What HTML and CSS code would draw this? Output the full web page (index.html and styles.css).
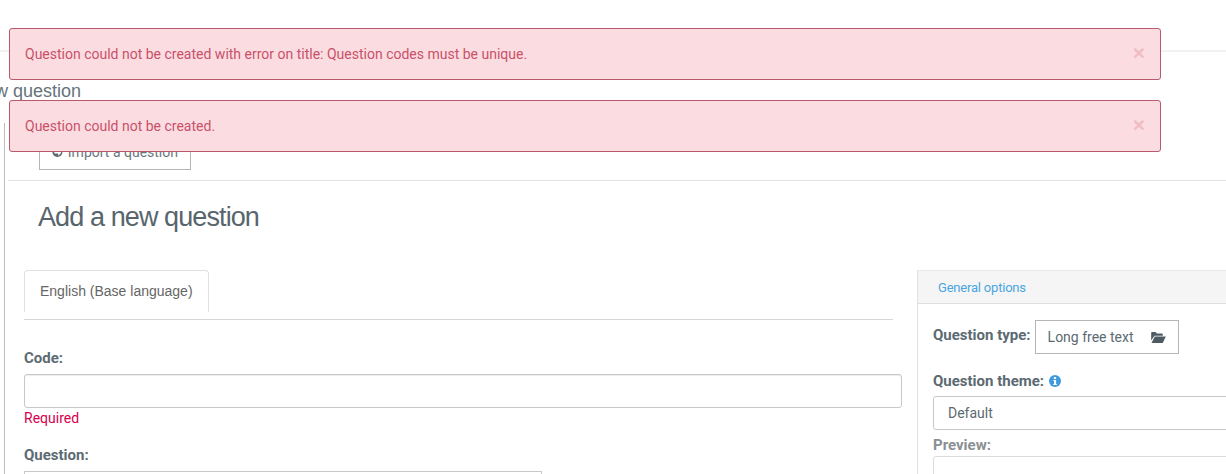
FILE: index.html
```html
<!DOCTYPE html>
<html lang="en">

<head>
    <meta charset="UTF-8">
    <meta name="viewport" content="width=device-width, initial-scale=1.0">
    <title>Add a new question</title>
    <link rel="stylesheet" href="styles.css">
</head>

<body>
    <div class="topbar"></div>
    <div class="crumb">Add a new question</div>

    <div class="main">
        <div class="toolbar">
            <a class="btn-import" href="javascript:;">
                <svg class="import-icon" viewBox="0 0 14 14">
                    <circle cx="7" cy="7" r="6.500" fill="#5c6a72"/>
                    <path d="M3 6h5V3l4 5-4 4V9H3z" fill="#fff"/>
                </svg>
                Import a question
            </a>
        </div>

        <h1 class="page-title">Add a new question</h1>

        <div class="columns">
            <div class="col-left">
                <div class="tabs">
                    <div class="tab">English (Base language)</div>
                </div>
                <label class="field-label">Code:</label>
                <div class="text-input"></div>
                <div class="required">Required</div>
                <label class="field-label question-label">Question:</label>
                <div class="editor"></div>
            </div>

            <div class="panel">
                <div class="panel-head"><a href="javascript:;">General options</a></div>
                <div class="panel-body">
                    <div class="type-row">
                        <label class="field-label type-label">Question type:</label>
                        <div class="type-btn">
                            Long free text
                            <svg class="folder-icon" viewBox="0 0 16 12">
                                <path d="M0 1.2C0 .5.5 0 1.2 0h3.6l1.5 1.600h5.200c.7 0 1.200.5 1.200 1.200V4H3.600L0 9.400z" fill="#4f5b63"/>
                                <path d="M3.900 5H16l-3.400 7H.4z" fill="#4f5b63"/>
                            </svg>
                        </div>
                    </div>
                    <label class="field-label theme-label">Question theme:
                        <svg class="info-icon" viewBox="0 0 12 12">
                            <circle cx="6" cy="6" r="6" fill="#3f9ae0"/>
                            <rect x="4.900" y="2" width="2.200" height="2" fill="#fff"/>
                            <path d="M4.300 5h2.800v4h.8v1.100H4.200V9H5V6.100H4.300z" fill="#fff"/>
                        </svg>
                    </label>
                    <div class="select-box">Default</div>
                    <label class="field-label preview-label">Preview:</label>
                    <div class="preview-box"></div>
                </div>
            </div>
        </div>
    </div>

    <!-- alerts sit over the page -->
    <div class="alerts">
        <div class="alert">
            Question could not be created with error on title: Question codes must be unique.
            <span class="alert-close">×</span>
        </div>
        <div class="alert">
            Question could not be created.
            <span class="alert-close">×</span>
        </div>
    </div>
</body>

</html>
```

FILE: styles.css
```css
html,
body {
    margin: 0;
    padding: 0;
    height: 474px;
    overflow: hidden;
    background: #fff;
}

body {
    position: relative;
    font-family: Roboto, "Liberation Sans", sans-serif;
    font-size: 14px;
    color: #5c6a72;
}

.topbar {
    height: 50px;
    border-bottom: 2px solid #f2f2f2;
}

.crumb {
    margin: 28px 0 0 -77px;
    height: 22px;
    font-family: "Liberation Sans", Arial, sans-serif;
    font-size: 18px;
    line-height: 22px;
    white-space: nowrap;
    color: #66737a;
}

.main {
    margin: 21px 0 0 4px;
    height: 351px;
    border-left: 1px solid #bdbdbd;
}

.toolbar {
    height: 58px;
    margin-left: 3px;
    padding: 11px 0 0 31px;
    box-sizing: border-box;
    border-bottom: 1px solid #e3e3e3;
}

.btn-import {
    display: inline-flex;
    align-items: center;
    gap: 5px;
    width: 152px;
    height: 36px;
    box-sizing: border-box;
    padding: 0 12px;
    border: 1px solid #b5b5b5;
    font-size: 14px;
    white-space: nowrap;
    color: #6b777e;
    text-decoration: none;
}

.import-icon {
    width: 14px;
    height: 14px;
}

.page-title {
    margin: 20px 0 0 33px;
    height: 32px;
    font-family: "Liberation Sans", Arial, sans-serif;
    font-size: 27px;
    font-weight: 400;
    line-height: 32px;
    letter-spacing: -0.9px;
    color: #58656d;
}

.columns {
    display: flex;
    align-items: flex-start;
    margin-top: 37px;
    padding-left: 19px;
}

.col-left {
    flex: 0 0 878px;
    margin-right: 15px;
}

.tabs {
    width: 869px;
    height: 49px;
    border-bottom: 1px solid #d5d8da;
    margin-bottom: 30px;
}

.tab {
    width: 185px;
    height: 42px;
    box-sizing: border-box;
    padding-left: 15px;
    border: 1px solid #e0e0e0;
    border-bottom: 0;
    border-radius: 4px 4px 0 0;
    font-family: "Liberation Sans", Arial, sans-serif;
    font-size: 14px;
    line-height: 41px;
    color: #666;
}

.field-label {
    display: block;
    font-size: 15px;
    font-weight: 700;
    line-height: 17px;
    color: #5c6a72;
    white-space: nowrap;
}

.text-input {
    height: 34px;
    margin-top: 7px;
    box-sizing: border-box;
    border: 1px solid #c8c8c8;
    border-radius: 3px;
    box-shadow: inset 0 1px 1px rgba(0, 0, 0, 0.075);
}

.required {
    font-size: 14px;
    line-height: 20px;
    color: #d6004c;
}

.question-label {
    margin-top: 19px;
}

.editor {
    width: 518px;
    height: 10px;
    margin-top: 7px;
    box-sizing: border-box;
    border: 1px solid #c8c8c8;
}

.panel {
    flex: 0 0 320px;
    height: 210px;
    box-sizing: border-box;
    border-left: 1px solid #dfe2e4;
    border-top: 1px solid #e8e8e8;
}

.panel-head {
    height: 33px;
    box-sizing: border-box;
    padding-left: 20px;
    background: #f5f5f5;
    border-bottom: 1px solid #dde0e2;
    font-size: 13px;
    line-height: 33px;
    letter-spacing: -0.2px;
}

.panel-head a {
    color: #4aa6e3;
    text-decoration: none;
}

.panel-body {
    padding: 16px 0 0 15px;
}

.type-row {
    display: flex;
    gap: 4px;
}

.type-label {
    align-self: center;
    margin-bottom: 4px;
}

.type-btn {
    display: flex;
    align-items: center;
    width: 144px;
    height: 34px;
    box-sizing: border-box;
    padding-left: 12px;
    border: 1px solid #b5b5b5;
    font-size: 14px;
    color: #5c6a72;
}

.folder-icon {
    width: 15px;
    height: 11px;
    margin-left: 17px;
}

.theme-label {
    margin-top: 19px;
}

.info-icon {
    width: 12px;
    height: 12px;
    margin-left: 1px;
    vertical-align: -1px;
}

.select-box {
    height: 34px;
    margin-top: 6px;
    box-sizing: border-box;
    padding-left: 14px;
    border: 1px solid #c8c8c8;
    border-radius: 3px;
    font-size: 14px;
    line-height: 32px;
    color: #5c6a72;
}

.preview-label {
    margin-top: 7px;
    color: #8a8f93;
}

.preview-box {
    height: 40px;
    margin-top: 2px;
    box-sizing: border-box;
    border: 1px solid #dcdcdc;
    border-radius: 3px;
}

.alerts {
    position: absolute;
    top: 28px;
    left: 9px;
    width: 1152px;
    display: flex;
    flex-direction: column;
    gap: 20px;
}

.alert {
    display: flex;
    justify-content: space-between;
    align-items: center;
    height: 52px;
    box-sizing: border-box;
    padding: 0 15px;
    background: #fbdde1;
    border: 1px solid #b95a6c;
    border-radius: 3px;
    font-size: 14px;
    color: #c9506a;
}

.alert-close {
    font-family: "Liberation Sans", Arial, sans-serif;
    font-size: 21px;
    font-weight: 700;
    line-height: 1;
    margin-top: -4px;
    color: #f0bcc4;
}
```
